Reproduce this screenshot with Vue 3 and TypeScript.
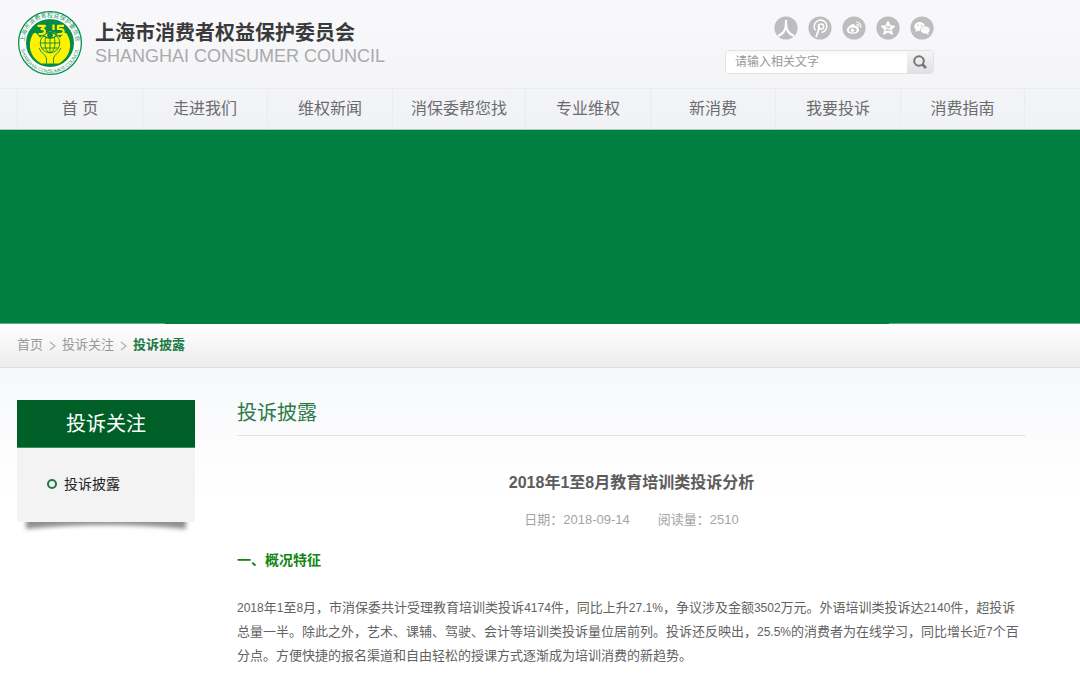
<script setup lang="ts">
import { ref } from 'vue'

interface Run {
  text: string
  kind: 'han' | 'latin'
}

const keyword = ref('')

const navItems: string[] = ['首 页', '走进我们', '维权新闻', '消保委帮您找', '专业维权', '新消费', '我要投诉', '消费指南']

const crumbs: string[] = ['首页', '投诉关注']

const metaItems: string[] = ['日期：2018-09-14', '阅读量：2510']

const paragraph =
  '2018年1至8月，市消保委共计受理教育培训类投诉4174件，同比上升27.1%，争议涉及金额3502万元。外语培训类投诉达2140件，超投诉总量一半。除此之外，艺术、课辅、驾驶、会计等培训类投诉量位居前列。投诉还反映出，25.5%的消费者为在线学习，同比增长近7个百分点。方便快捷的报名渠道和自由轻松的授课方式逐渐成为培训消费的新趋势。'

// Splits mixed text so that digits can be set slightly smaller than the Chinese characters.
function runs(source: string): Run[] {
  const parts = source.match(/[0-9.%]+|[^0-9.%]+/g) ?? []
  return parts.map((text): Run => ({ text, kind: /^[0-9.%]+$/.test(text) ? 'latin' : 'han' }))
}

const bodyRuns = runs(paragraph)
</script>

<template>
  <div class="page">
    <header class="header">
      <div class="top">
        <a class="brand" href="#">
          <svg class="logo" viewBox="0 0 66 66" aria-hidden="true">
            <defs>
              <path id="arc-top" d="M8.6 41 A25.7 25.7 0 1 1 57.4 41" />
              <path id="arc-bottom" d="M3.6 36 A29.5 29.500 0 0 0 62.400 36" />
            </defs>
            <circle cx="33" cy="33" r="31.400" fill="#fff" stroke="#0b8f55" stroke-width="1.300" />
            <circle cx="33" cy="33" r="24" fill="#078a45" />
            <path d="M24 53.500 C13 47 10 35 15.500 25 C16.500 22.500 18.500 22 19.500 23.500 L23 27.500 H43 L46.500 23.500 C47.500 22 49.500 22.500 50.500 25 C56 35 53 47 42 53.500 Z" fill="#fff200" />
            <circle cx="33" cy="32" r="10.500" fill="#fff200" />
            <g fill="none" stroke="#078a45" stroke-width="0.9">
              <circle cx="33" cy="33" r="9.800" />
              <ellipse cx="33" cy="33" rx="5" ry="9.800" />
              <path d="M33 23 V43 M23.200 33 H42.800 M24.500 38 H41.500" />
              <path d="M22 38 C24 43 28 44 29.500 48 V53.500 M44 38 C42 43 38 44 36.500 48 V53.500" />
            </g>
            <path d="M26 25.500 Q33 19 40 25.500 Q33 31 26 25.500 Z" fill="#fff200" stroke="#078a45" stroke-width="1.300" />
            <circle cx="33" cy="25.300" r="2.800" fill="#078a45" />
            <g fill="none" stroke="#fff200" stroke-width="2.200" stroke-linejoin="round">
              <path d="M20.500 15.800 H28 L24.500 19 C29 19 29 24 24.500 24 H21.500" />
              <path d="M36.500 14.500 V20" />
              <path d="M47 15.800 H41 V19 H43.500 C48 19 47.500 24 43.500 24 H40.500" />
            </g>
            <text class="logo-cn"><textPath href="#arc-top" startOffset="50%">上海市消费者权益保护委员会</textPath></text>
            <text class="logo-en"><textPath href="#arc-bottom" startOffset="50%">SHANGHAI CONSUMER COUNCIL</textPath></text>
          </svg>
          <span class="names">
            <strong class="name-cn">上海市消费者权益保护委员会</strong>
            <span class="name-en">SHANGHAI CONSUMER COUNCIL</span>
          </span>
        </a>

        <div class="tools">
          <div class="social">
            <a href="#" aria-label="人人网">
              <svg viewBox="0 0 24 24">
                <circle cx="12" cy="12" r="11.600" fill="#bdbdbf" />
                <path d="M12 4 V8 C12 14 9 18 4 20 M12 8 C12 14 15 18 20 20" fill="none" stroke="#fff" stroke-width="2.300" />
              </svg>
            </a>
            <a href="#" aria-label="朋友网">
              <svg viewBox="0 0 24 24">
                <circle cx="12" cy="12" r="11.600" fill="#bdbdbf" />
                <path d="M7.500 14.200 A6.300 6.300 0 1 1 13.500 16.600" fill="none" stroke="#fff" stroke-width="1.500" />
                <path d="M11.500 11 L8.300 20.500" fill="none" stroke="#fff" stroke-width="1.800" stroke-linecap="round" />
                <circle cx="13" cy="10.600" r="2.700" fill="none" stroke="#fff" stroke-width="1.500" />
              </svg>
            </a>
            <a href="#" aria-label="新浪微博">
              <svg viewBox="0 0 24 24">
                <circle cx="12" cy="12" r="11.600" fill="#bdbdbf" />
                <path d="M10.500 8.300 C12 7.700 13.200 8.400 12.800 10 C15 9.300 16.300 10.200 15.700 11.700 C18 12.700 17.500 15.300 15.300 16.700 C12 18.700 5 18 4.800 14.300 C4.800 12 8 9 10.500 8.300 Z" fill="#fff" />
                <ellipse cx="10.800" cy="14" rx="3.900" ry="2.500" fill="#bdbdbf" />
                <circle cx="10.400" cy="14.200" r="1.800" fill="#fff" />
                <path d="M14.200 6 A4.800 4.800 0 0 1 19 11.400 M14.700 8.300 A2.400 2.400 0 0 1 16.900 10.800" fill="none" stroke="#fff" stroke-width="1.100" stroke-linecap="round" />
              </svg>
            </a>
            <a href="#" aria-label="QQ空间">
              <svg viewBox="0 0 24 24">
                <circle cx="12" cy="12" r="11.600" fill="#bdbdbf" />
                <path d="M12 5 L14.200 9.600 L19 10.200 L15.500 13.600 L16.500 18.500 L12 16.200 L7.500 18.500 L8.500 13.600 L5 10.200 L9.800 9.600 Z" fill="#fff" stroke="#fff" stroke-width="0.800" stroke-linejoin="round" />
                <path d="M9.300 10.800 H14.200 L9.800 14.300 H15" fill="none" stroke="#bdbdbf" stroke-width="1" />
              </svg>
            </a>
            <a href="#" aria-label="微信">
              <svg viewBox="0 0 24 24">
                <circle cx="12" cy="12" r="11.600" fill="#bdbdbf" />
                <ellipse cx="9.600" cy="10.500" rx="5.400" ry="4.400" fill="#fff" />
                <path d="M6 13 L5.500 16 L8.500 14.500 Z" fill="#fff" />
                <ellipse cx="15.200" cy="14" rx="4.800" ry="3.900" fill="#fff" stroke="#bdbdbf" stroke-width="0.800" />
                <path d="M16 17.500 L18.500 19 L18.300 16.500 Z" fill="#fff" />
                <g fill="#bdbdbf">
                  <circle cx="7.800" cy="9.300" r="0.700" />
                  <circle cx="11.300" cy="9.300" r="0.700" />
                  <circle cx="13.700" cy="13" r="0.600" />
                  <circle cx="16.700" cy="13" r="0.600" />
                </g>
              </svg>
            </a>
          </div>
          <form class="search" @submit.prevent>
            <input v-model="keyword" type="text" placeholder="请输入相关文字" aria-label="请输入相关文字" />
            <button type="submit" aria-label="搜索">
              <svg viewBox="0 0 16 16" fill="none" stroke="#77777a" stroke-width="2">
                <circle cx="7" cy="7" r="4.800" />
                <path d="M10.500 10.500 L14 14" stroke-width="2.600" />
              </svg>
            </button>
          </form>
        </div>
      </div>

      <nav class="nav">
        <ul>
          <li v-for="item in navItems" :key="item"><a href="#">{{ item }}</a></li>
        </ul>
      </nav>
    </header>

    <div class="banner"></div>

    <nav class="crumbs">
      <template v-for="crumb in crumbs" :key="crumb">
        <a href="#">{{ crumb }}</a>
        <svg viewBox="0 0 7 10" aria-hidden="true"><path d="M1 1 L6 5 L1 9" fill="none" stroke="#b0b0b0" stroke-width="1.200" /></svg>
      </template>
      <a class="current" href="#">投诉披露</a>
    </nav>

    <div class="content">
      <aside class="side">
        <h2>投诉关注</h2>
        <ul>
          <li><a href="#"><i class="ring"></i>投诉披露</a></li>
        </ul>
        <svg class="shade" viewBox="0 0 178 16" preserveAspectRatio="none" aria-hidden="true">
          <defs>
            <filter id="soft" x="-5%" y="-60%" width="110%" height="220%"><feGaussianBlur stdDeviation="2" /></filter>
          </defs>
          <path d="M9 -4 H169 V7 Q89 -1 9 7 Z" fill="#909090" filter="url(#soft)" />
        </svg>
      </aside>

      <main class="main">
        <h1 class="column-title">投诉披露</h1>
        <article>
          <h2 class="title">2018年1至8月教育培训类投诉分析</h2>
          <p class="meta">
            <span v-for="item in metaItems" :key="item">{{ item }}</span>
          </p>
          <h3 class="section">一、概况特征</h3>
          <p class="body"><template v-for="(run, i) in bodyRuns" :key="i"><span v-if="run.kind === 'latin'" class="latin">{{ run.text }}</span><template v-else>{{ run.text }}</template></template></p>
        </article>
      </main>
    </div>
  </div>
</template>

<style>
body {
  margin: 0;
  background: #fff;
}
</style>

<style scoped>
.page {
  font-family: "Liberation Sans", "Noto Sans CJK SC", sans-serif;
  font-size: 13px;
  color: #666;
}

a {
  color: inherit;
  text-decoration: none;
}

ul {
  list-style: none;
  margin: 0;
  padding: 0;
}

h1,
h2,
h3,
p {
  margin: 0;
}

.header {
  background: linear-gradient(#f9f9fb, #f1f2f5);
  border-bottom: 1px solid #a5cfb8;
}

.top {
  display: flex;
  justify-content: space-between;
  height: 88px;
  padding: 0 146px 0 17px;
}

.brand {
  display: flex;
  align-items: flex-start;
  gap: 12px;
  padding-top: 10px;
}

.logo {
  width: 66px;
  height: 66px;
}

.logo-cn,
.logo-en {
  font-size: 6px;
  fill: #1f9560;
  text-anchor: middle;
}

.logo-en {
  font-size: 5px;
}

.names {
  display: flex;
  flex-direction: column;
  padding-top: 10px;
}

.name-cn {
  font-size: 20px;
  line-height: 26px;
  color: #3a3a3c;
}

.name-en {
  font-size: 18px;
  line-height: 20px;
  color: #aaaaac;
}

.tools {
  display: flex;
  flex-direction: column;
  align-items: flex-end;
  gap: 10px;
  padding-top: 16px;
}

.social {
  display: flex;
  gap: 10px;
}

.social a,
.social svg {
  display: block;
  width: 24px;
  height: 24px;
}

.search {
  display: flex;
  box-sizing: border-box;
  width: 209px;
  height: 24px;
  overflow: hidden;
  border: 1px solid #e2e2e4;
  border-radius: 4px;
  background: #fff;
}

.search input {
  flex: 1;
  min-width: 0;
  padding: 0 9px;
  border: 0;
  outline: 0;
  background: linear-gradient(#f7f7f8, #fff 5px);
  font: 12px "Liberation Sans", "Noto Sans CJK SC", sans-serif;
  color: #666;
}

.search input::placeholder {
  color: #999;
  opacity: 1;
}

.search button {
  display: flex;
  align-items: center;
  justify-content: center;
  width: 26px;
  padding: 0;
  border: 0;
  background: linear-gradient(#f5f5f6, #e0e0e2);
}

.search button svg {
  width: 16px;
  height: 16px;
}

.nav {
  padding-left: 17px;
  border-top: 1px solid #ebebed;
}

.nav ul {
  display: flex;
}

.nav li {
  box-sizing: border-box;
  min-width: 125px;
  padding: 0 18px;
  border-left: 1px solid #ebebed;
  font-size: 16px;
  line-height: 40px;
  text-align: center;
  white-space: nowrap;
  color: #6c6c6e;
}

.nav li:last-child {
  border-right: 1px solid #ebebed;
}

.banner {
  display: flex;
  align-items: flex-end;
  justify-content: space-between;
  height: 194px;
  background: #008040;
}

.banner::before,
.banner::after {
  content: "";
  width: 165px;
  height: 1px;
  background: #5fae85;
}

.banner::after {
  width: 191px;
}

.crumbs {
  display: flex;
  align-items: center;
  gap: 6px;
  height: 43px;
  padding-left: 17px;
  border-bottom: 1px solid #dcdcdc;
  background: linear-gradient(#fff, #ececec);
  line-height: 20px;
  color: #999;
}

.crumbs a {
  padding-bottom: 2px;
}

.crumbs svg {
  width: 7px;
  height: 10px;
}

.crumbs .current {
  font-weight: bold;
  color: #1b7a45;
}

.content {
  display: flex;
  align-items: flex-start;
  gap: 42px;
  padding: 32px 54px 20px 17px;
  background: linear-gradient(#f7f8fa, #fff 130px);
}

.side {
  flex: 0 0 178px;
}

.side h2 {
  padding-top: 2px;
  border-bottom: 1px solid #2f9a5b;
  background: #005f26;
  font-size: 20px;
  font-weight: normal;
  line-height: 45px;
  text-align: center;
  color: #fff;
}

.side ul {
  padding: 23px 30px 25px;
  background: #f3f3f3;
}

.side li a {
  display: flex;
  align-items: center;
  gap: 7px;
  font-size: 14px;
  line-height: 26px;
  color: #222;
}

.ring {
  box-sizing: border-box;
  width: 10px;
  height: 10px;
  border: 2px solid #1b7a45;
  border-radius: 50%;
}

.shade {
  display: block;
  width: 100%;
  height: 16px;
}

.main {
  flex: 1;
  min-width: 0;
}

.column-title {
  padding: 1px 0 9px;
  border-bottom: 1px solid #e3e4e6;
  font-size: 20px;
  font-weight: normal;
  line-height: 25px;
  color: #2a7a48;
}

.title {
  padding-top: 34px;
  font-size: 16px;
  line-height: 26px;
  text-align: center;
  color: #5c5c5c;
}

.meta {
  display: flex;
  justify-content: center;
  gap: 28px;
  padding-top: 14px;
  line-height: 20px;
  color: #a4a4a4;
}

.section {
  padding-top: 19px;
  font-size: 14px;
  line-height: 22px;
  color: #128412;
}

.body {
  padding-top: 25px;
  line-height: 24px;
  color: #626262;
}

.latin {
  font-size: 12px;
}
</style>
